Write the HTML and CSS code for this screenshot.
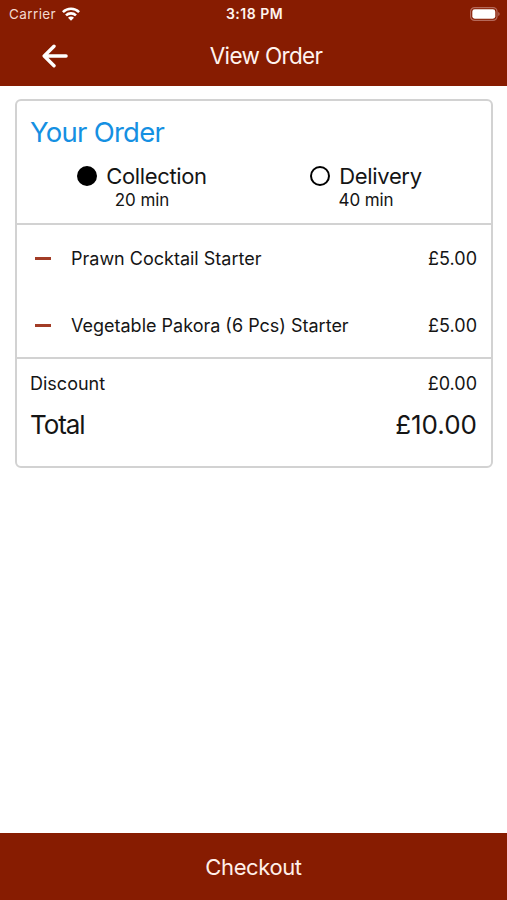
FILE: index.html
```html
<!DOCTYPE html>
<html lang="en">
<head>
<meta charset="utf-8">
<title>View Order</title>
<link rel="stylesheet" href="styles.css">
</head>
<body>
<div class="screen">
  <header class="header">
    <div class="status">
      <div class="carrier"><span class="carrier-name">Carrier</span>
        <svg class="wifi" width="18" height="14" viewBox="0 0 18 14" fill="none" stroke="#fff" stroke-width="2.6"><path d="M.9 5.1a11.6 11.6 0 0 1 16.2 0M4 8.4a7.2 7.2 0 0 1 10 0"/><path d="M9 13.8 6 10.8a4.2 4.2 0 0 1 6 0z" fill="#fff" stroke="none"/></svg>
      </div>
      <span class="time">3:18 PM</span>
      <svg class="battery" width="30" height="14" viewBox="0 0 30 14"><rect x=".6" y=".6" width="26.4" height="12.8" rx="4" fill="none" stroke="#b5695a" stroke-width="1.2"/><rect x="2.3" y="2.3" width="23" height="9.4" rx="2.4" fill="#fff"/><path d="M28.2 5v4q1.5-.5 1.5-2t-1.5-2z" fill="#b5695a"/></svg>
    </div>
    <nav class="nav">
      <svg class="back" width="26" height="24" viewBox="0 0 26 24" fill="none" stroke="#fff" stroke-width="3.4" stroke-linecap="round" stroke-linejoin="round"><path d="M12 2.2 2.2 12l9.8 9.8M2.5 12h21.6"/></svg>
      <h1 class="title"><span>View Order</span></h1>
    </nav>
  </header>
  <main class="content">
    <section class="card">
      <div class="intro">
        <h2 class="heading"><span>Your Order</span></h2>
        <div class="options">
          <div class="option"><div class="choice"><i class="radio radio-on"></i><span class="choice-name">Collection</span></div><span class="wait">20 min</span></div>
          <div class="option"><div class="choice"><i class="radio"></i><span class="choice-name">Delivery</span></div><span class="wait">40 min</span></div>
        </div>
      </div>
      <div class="items">
        <div class="item"><i class="minus"></i><span class="name">Prawn Cocktail Starter</span><span class="price">£5.00</span></div>
        <div class="item"><i class="minus"></i><span class="name">Vegetable Pakora (6 Pcs) Starter</span><span class="price">£5.00</span></div>
      </div>
      <div class="summary">
        <div class="discount"><span>Discount</span><span class="price">£0.00</span></div>
        <div class="total"><span class="total-label">Total</span><span class="total-price">£10.00</span></div>
      </div>
    </section>
  </main>
  <footer class="checkout"><span>Checkout</span></footer>
</div>
</body>
</html>
```
FILE: styles.css
```css
* { box-sizing: border-box; }
body { margin: 0; background: #fff; color: #151515; font-family: Inter, "Liberation Sans", sans-serif; }
h1, h2 { margin: 0; font-weight: 400; }
svg { display: block; }
.screen { display: flex; flex-direction: column; height: 900px; }
.header { height: 86px; background: #871c01; color: #fff3ee; }
.status { display: grid; grid-template-columns: 1fr auto 1fr; align-items: center; height: 27px; padding: 0 7px 0 9px; }
.carrier { display: flex; align-items: center; gap: 6px; font-size: 13.5px; letter-spacing: .4px; color: #f3d9d0; }
.time { font-size: 14px; font-weight: 600; letter-spacing: .5px; }
.battery { justify-self: end; }
.nav { display: grid; grid-template-columns: 84px 1fr 59px; align-items: center; height: 58px; }
.back { margin-left: 42px; }
.title { padding-bottom: 2px; text-align: center; font-size: 22.5px; letter-spacing: -.65px; }
.content { flex: 1; padding: 13px 14px 0 15px; }
.card { height: 369px; border: 2px solid #d2d2d2; border-radius: 6px; }
.intro { height: 124px; padding: 13px 13px 0; border-bottom: 2px solid #d2d2d2; }
.heading { font-size: 27.5px; line-height: 36px; letter-spacing: -.75px; color: #1590e2; }
.options { display: grid; grid-template-columns: 1fr 1fr; margin-top: 13px; }
.option { display: flex; flex-direction: column; align-items: center; }
.choice { display: flex; align-items: center; gap: 9px; height: 26px; font-size: 22px; letter-spacing: -.35px; }
.radio { width: 20px; height: 20px; border: 2px solid #000; border-radius: 50%; }
.radio-on { background: #000; }
.wait { font-size: 17px; line-height: 22px; letter-spacing: -.1px; }
.items { height: 134px; border-bottom: 2px solid #d2d2d2; font-size: 18px; }
.item { display: flex; align-items: center; height: 67px; padding: 0 14px 0 18px; }
.minus { width: 16px; height: 3px; margin: 0 20px 1px 0; background: #a23c26; }
.name { flex: 1; }
.summary { padding: 12px 14px 0 13px; }
.discount, .total { display: flex; justify-content: space-between; }
.discount { font-size: 18px; line-height: 26px; }
.total { margin-top: 11px; font-size: 26px; line-height: 34px; }
.total-label { letter-spacing: -1.1px; }
.checkout { display: flex; align-items: center; justify-content: center; height: 67px; background: #871c01; color: #ffefe9; font-size: 22px; letter-spacing: -.4px; }
```
